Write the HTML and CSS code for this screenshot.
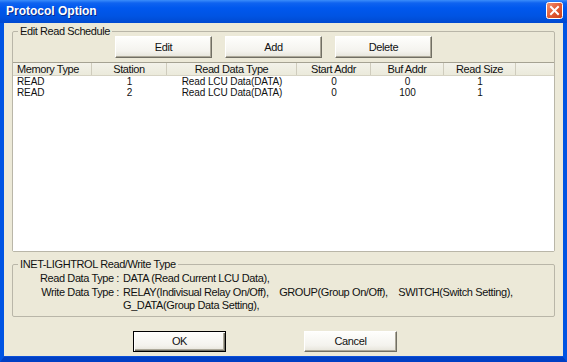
FILE: index.html
```html
<!DOCTYPE html>
<html lang="en">
<head>
    <meta charset="UTF-8">
    <title>Protocol Option</title>
    <link rel="stylesheet" href="styles.css">
</head>
<body>
    <div class="window">
        <div class="titlebar">
            <span class="title">Protocol Option</span>
            <button class="close" aria-label="Close">
                <svg width="17" height="17" viewBox="0 0 17 17">
                    <defs>
                        <linearGradient id="closeFill" x1="0" y1="0" x2="1" y2="1">
                            <stop offset="0" stop-color="#f0967a"/>
                            <stop offset="0.5" stop-color="#e35b34"/>
                            <stop offset="1" stop-color="#c8401c"/>
                        </linearGradient>
                    </defs>
                    <rect x="0.5" y="0.5" width="16" height="16" rx="2" fill="url(#closeFill)" stroke="#fff"/>
                    <path d="M5 5 L12 12 M12 5 L5 12" stroke="#fff" stroke-width="2" stroke-linecap="square"/>
                </svg>
            </button>
        </div>

        <div class="client">
            <fieldset class="group schedule">
                <legend>Edit Read Schedule</legend>
                <div class="toolbar">
                    <button class="btn">Edit</button>
                    <button class="btn">Add</button>
                    <button class="btn">Delete</button>
                </div>
                <div class="list">
                    <div class="row head">
                        <span class="cell left">Memory Type</span>
                        <span class="cell">Station</span>
                        <span class="cell">Read Data Type</span>
                        <span class="cell">Start Addr</span>
                        <span class="cell">Buf Addr</span>
                        <span class="cell">Read Size</span>
                        <span class="cell"></span>
                    </div>
                    <div class="row">
                        <span class="cell left">READ</span>
                        <span class="cell">1</span>
                        <span class="cell">Read LCU Data(DATA)</span>
                        <span class="cell">0</span>
                        <span class="cell">0</span>
                        <span class="cell">1</span>
                        <span class="cell"></span>
                    </div>
                    <div class="row">
                        <span class="cell left">READ</span>
                        <span class="cell">2</span>
                        <span class="cell">Read LCU Data(DATA)</span>
                        <span class="cell">0</span>
                        <span class="cell">100</span>
                        <span class="cell">1</span>
                        <span class="cell"></span>
                    </div>
                </div>
            </fieldset>

            <fieldset class="group types">
                <legend>INET-LIGHTROL Read/Write Type</legend>
                <div class="type-grid">
                    <span class="label">Read Data Type :</span>
                    <span>DATA (Read Current LCU Data),</span>
                    <span class="label">Write Data Type :</span>
                    <span>RELAY(Indivisual Relay On/Off),&nbsp;&nbsp;&nbsp; GROUP(Group On/Off),&nbsp;&nbsp;&nbsp; SWITCH(Switch Setting),</span>
                    <span></span>
                    <span>G_DATA(Group Data Setting),</span>
                </div>
            </fieldset>

            <div class="actions">
                <button class="btn default">OK</button>
                <button class="btn">Cancel</button>
            </div>
        </div>
    </div>
</body>
</html>
```

FILE: styles.css
```css
:root {
    --face: #ece9d8;
    --frame: #0054e3;
    --group-line: #b9b6a8;
    --text: #111;
}
html, body {
    margin: 0;
    padding: 0;
    background: var(--face);
}
body {
    width: 567px;
    height: 362px;
    overflow: hidden;
    font-family: "Liberation Sans", Arial, sans-serif;
    font-size: 11px;
    letter-spacing: -0.4px;
    color: var(--text);
}
.window {
    box-sizing: border-box;
    width: 567px;
    height: 362px;
    display: flex;
    flex-direction: column;
    border-left: 4px solid var(--frame);
    border-right: 4px solid var(--frame);
    border-bottom: 5px solid #003fc4;
    box-shadow: inset 0 -1px 0 #0a4fd8;
}

/* title bar */
.titlebar {
    height: 23px;
    margin: 0 -4px;
    display: flex;
    align-items: center;
    padding: 0 4px 0 6px;
    background: linear-gradient(#3b8dfa 0, #0f63f0 3px, #0058ee 8px, #0054e3 16px, #0049d0 23px);
    flex-shrink: 0;
}
.title {
    flex: 1;
    color: #fff;
    font-weight: bold;
    font-size: 12px;
    letter-spacing: 0;
    text-shadow: 1px 1px 0 #0a2a8a;
    margin-top: -1px;
}
.close {
    width: 17px;
    height: 17px;
    padding: 0;
    border: none;
    background: none;
    display: flex;
    margin-top: -2px;
}

/* client area */
.client {
    flex: 1;
    padding: 2px 8px 0;
    display: flex;
    flex-direction: column;
}
.group {
    margin: 0;
    padding: 0;
    border: 1px solid var(--group-line);
    border-radius: 2px;
    min-width: 0;
}
.group legend {
    margin-left: 5px;
    padding: 0 2px;
    line-height: 13px;
}

/* schedule group */
.toolbar {
    display: flex;
    gap: 13px;
    padding-left: 102px;
    margin-top: -2px;
    margin-bottom: 4px;
}
.toolbar .btn {
    width: 97px;
    height: 22px;
}
.list {
    height: 188px;
    background: #fff;
    border-top: 1px solid #a5a293;
}
.row {
    display: grid;
    grid-template-columns: 79px 75px 130px 74px 73px 72px 1fr;
    font-size: 10px;
    letter-spacing: -0.1px;
    line-height: 11px;
    height: 11px;
}
.row.head {
    font-size: 11px;
    letter-spacing: -0.4px;
    height: 12px;
    line-height: 12px;
    background: linear-gradient(#f3f2ea, #ebeadb);
    border-bottom: 1px solid #d6d3c4;
}
.cell {
    text-align: center;
    white-space: nowrap;
    overflow: hidden;
}
.cell.left {
    text-align: left;
    padding-left: 4px;
}
.head .cell {
    border-right: 1px solid #cfccbd;
}
.head .cell:last-child {
    border-right: none;
}

/* read/write type group */
.types {
    margin-top: 6px;
    padding: 1px 0 3px;
}
.type-grid {
    display: grid;
    grid-template-columns: 106px 1fr;
    column-gap: 4px;
    line-height: 13.5px;
}
.type-grid .label {
    text-align: right;
}

/* buttons */
.btn {
    font: inherit;
    letter-spacing: inherit;
    color: var(--text);
    padding: 0;
    background: linear-gradient(#fefefc, #f4f3ee 70%, #e6e4da);
    border: 1px solid;
    border-color: #fff #716f64 #716f64 #fff;
    box-shadow: inset -1px -1px 0 #aca899;
}
.btn.default {
    border: 1px solid #000;
    box-shadow: inset 1px 1px 0 #fff, inset -1px -1px 0 #716f64, inset -2px -2px 0 #aca899;
}
.actions {
    display: flex;
    gap: 78px;
    padding-left: 121px;
    margin-top: 14px;
}
.actions .btn {
    width: 93px;
    height: 21px;
}
```
